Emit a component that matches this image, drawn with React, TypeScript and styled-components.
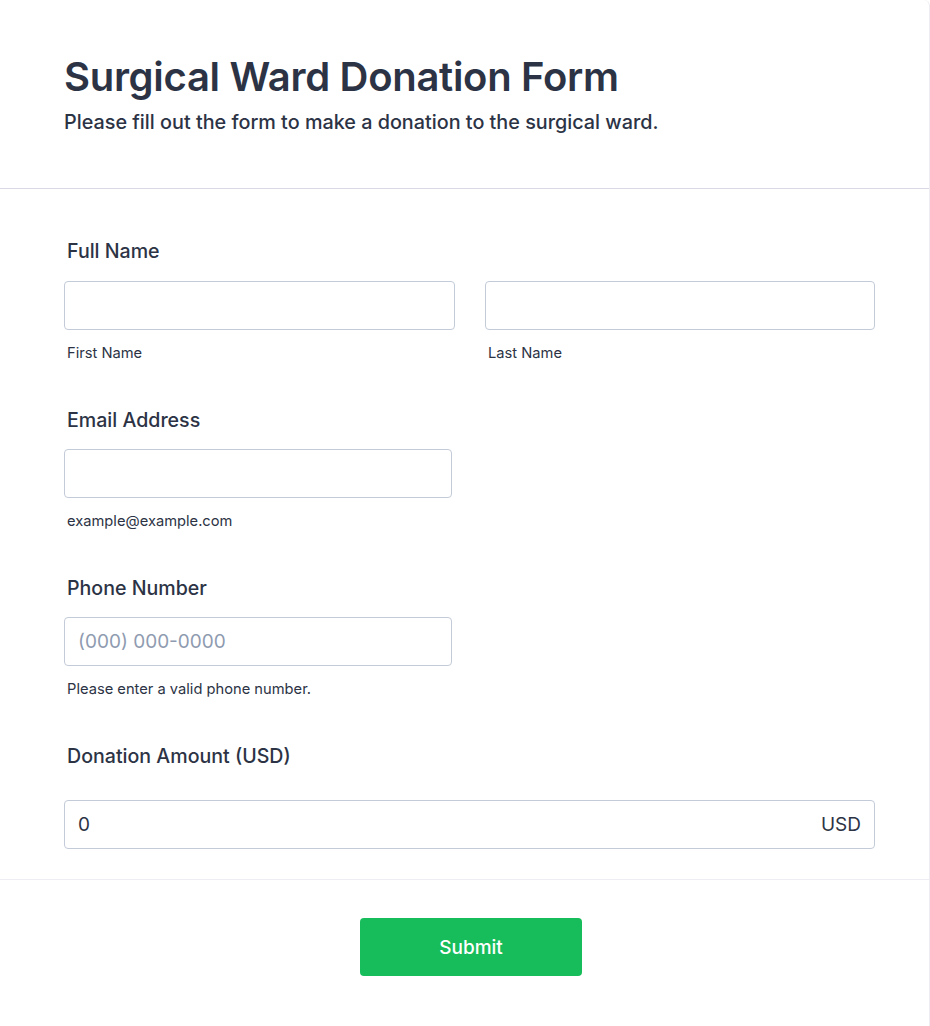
import React from 'react'
import styled, { createGlobalStyle } from 'styled-components'

const GlobalStyle = createGlobalStyle`
  html, body {
    margin: 0;
    padding: 0;
    background: #ffffff;
    font-family: Inter, "Noto Sans", sans-serif;
    color: #2c3345;
  }
  * { box-sizing: border-box; }
`

const Card = styled.div`
  width: 930px;
  min-height: 1026px;
  background: #fff;
  border-right: 1px solid #ececf2;
  border-top-right-radius: 6px;
`

const Header = styled.header`
  padding: 53px 64px 54px;
  border-bottom: 1px solid #d8d8e6;
`

const Title = styled.h1`
  margin: 0;
  font-size: 40px;
  line-height: 48px;
  font-weight: 600;
  letter-spacing: -0.3px;
  color: #2c3345;
`

const Subtitle = styled.p`
  margin: 9px 0 0;
  font-size: 19.8px;
  line-height: 24px;
  font-weight: 500;
  color: #2c3345;
`

const FormBody = styled.div`
  padding: 50px 54px 30px 64px;
  border-bottom: 1px solid #ededf4;
`

const Field = styled.div<{ $last?: boolean }>`
  margin-bottom: ${(p) => (p.$last ? '0' : '46px')};
`

const Label = styled.label<{ $gap?: number }>`
  display: block;
  padding-left: 3px;
  font-size: 19.6px;
  line-height: 24px;
  font-weight: 500;
  color: #2c3345;
  margin-bottom: ${(p) => p.$gap ?? 18}px;
`

const Row = styled.div`
  display: grid;
  grid-template-columns: 391px 390px;
  column-gap: 30px;
`

const Input = styled.input<{ $width?: number }>`
  display: block;
  width: ${(p) => (p.$width ? `${p.$width}px` : '100%')};
  height: 49px;
  padding: 0 13px;
  border: 1px solid #c3cad8;
  border-radius: 4px;
  font-family: Inter, "Noto Sans", sans-serif;
  font-size: 19px;
  color: #2c3345;
  background: #fff;
  outline: none;
  &::placeholder {
    color: #8f9bb0;
  }
`

const SubLabel = styled.div`
  margin-top: 14px;
  padding-left: 3px;
  font-size: 14.7px;
  line-height: 18px;
  color: #2c3345;
`

const Currency = styled.div`
  display: flex;
  align-items: center;
  height: 49px;
  padding: 0 13px;
  border: 1px solid #c3cad8;
  border-radius: 4px;
  font-size: 19px;
  color: #2c3345;
`

const AmountInput = styled.input`
  flex: 1;
  border: none;
  outline: none;
  padding: 0;
  font-family: Inter, "Noto Sans", sans-serif;
  font-size: 19px;
  color: #2c3345;
  background: transparent;
`

const Footer = styled.div`
  display: flex;
  justify-content: center;
  padding: 38px 0 0;
  margin-left: 13px;
`

const SubmitButton = styled.button`
  width: 222px;
  height: 58px;
  border: none;
  border-radius: 4px;
  background: #18bd5b;
  color: #fff;
  font-family: Inter, "Noto Sans", sans-serif;
  font-size: 19px;
  font-weight: 500;
  cursor: pointer;
`

export default function App() {
  return (
    <>
      <GlobalStyle />
      <Card>
        <Header>
          <Title>Surgical Ward Donation Form</Title>
          <Subtitle>Please fill out the form to make a donation to the surgical ward.</Subtitle>
        </Header>
        <FormBody>
          <Field>
            <Label>Full Name</Label>
            <Row>
              <div>
                <Input type="text" />
                <SubLabel>First Name</SubLabel>
              </div>
              <div>
                <Input type="text" />
                <SubLabel>Last Name</SubLabel>
              </div>
            </Row>
          </Field>
          <Field>
            <Label $gap={17}>Email Address</Label>
            <Input type="email" $width={388} />
            <SubLabel>example@example.com</SubLabel>
          </Field>
          <Field>
            <Label $gap={17}>Phone Number</Label>
            <Input type="tel" $width={388} placeholder="(000) 000-0000" />
            <SubLabel>Please enter a valid phone number.</SubLabel>
          </Field>
          <Field $last>
            <Label $gap={32}>Donation Amount (USD)</Label>
            <Currency>
              <AmountInput type="text" defaultValue="0" />
              <span>USD</span>
            </Currency>
          </Field>
        </FormBody>
        <Footer>
          <SubmitButton type="submit">Submit</SubmitButton>
        </Footer>
      </Card>
    </>
  )
}
